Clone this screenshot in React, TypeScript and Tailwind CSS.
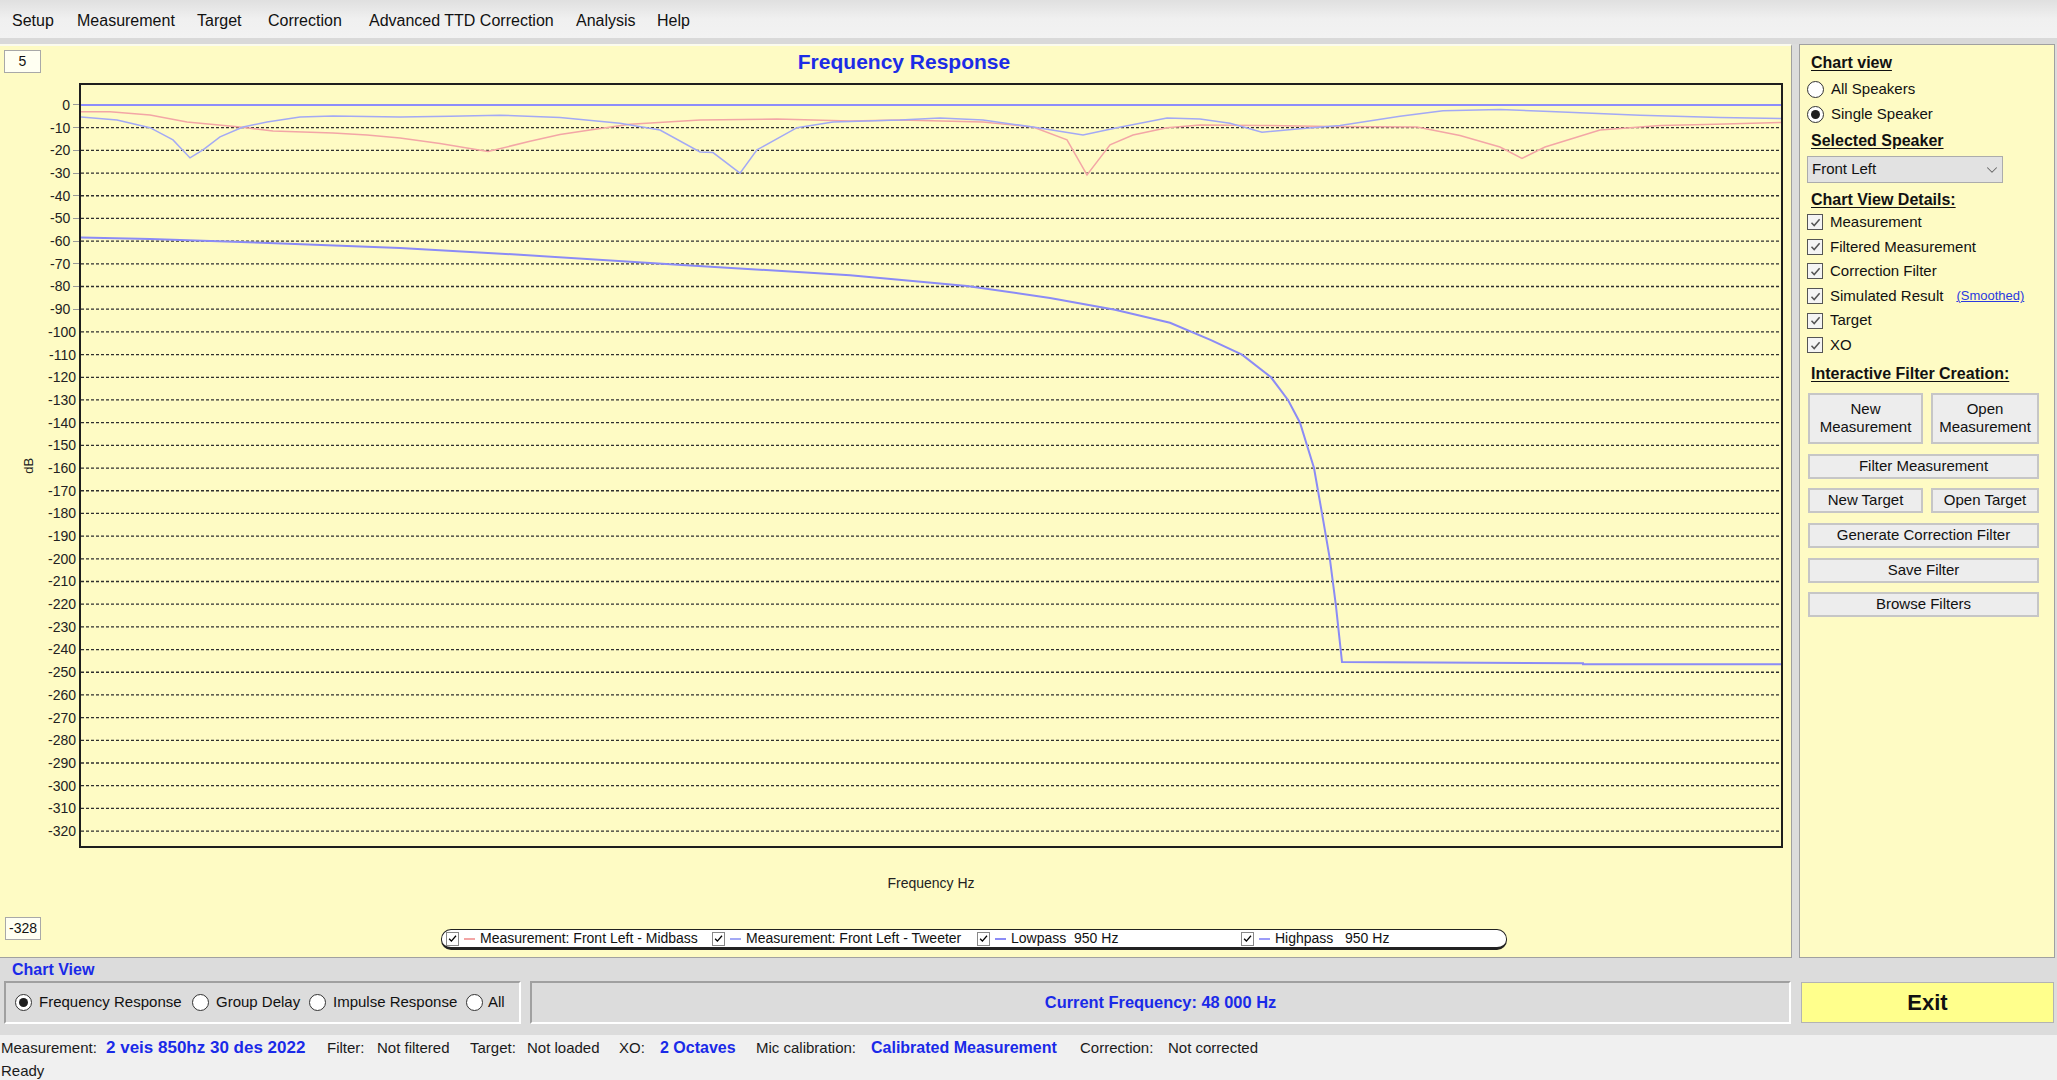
import React from "react";
import { ChevronDown } from "lucide-react";

// chart geometry (plot inner box: page x 81, page y 85, 1700 x 761)
const X0 = 81;
const Y0 = 20; // 0 dB line inside the plot
const DB = 2.269; // px per dB

const toPts = (pts: [number, number][]) =>
  pts.map(([x, d]) => `${(x - X0).toFixed(1)},${(Y0 - d * DB).toFixed(1)}`).join(" ");

const midbass: [number, number][] = [
  [81, -3], [110, -3], [150, -4.4], [187, -7.5], [240, -9.7], [273, -11.5], [333, -12.3],
  [367, -13.2], [400, -14.5], [440, -17], [488, -20.5], [530, -16], [560, -13], [590, -11],
  [630, -8.5], [700, -6.6], [777, -6.2], [850, -7], [900, -6.6], [983, -7.5], [1033, -9.7],
  [1067, -15.4], [1087, -30.8], [1110, -17.6], [1133, -13.2], [1167, -10], [1200, -8.8],
  [1260, -9], [1330, -9.5], [1417, -9.7], [1460, -13.5], [1500, -18.5], [1522, -23.5],
  [1545, -18.5], [1600, -11], [1660, -9], [1706, -8.6], [1782, -7.7],
];

const tweeter: [number, number][] = [
  [81, -5.3], [117, -6.6], [150, -10], [173, -15.4], [190, -23.3], [203, -19.8], [220, -14],
  [243, -9.7], [267, -7.5], [300, -5.3], [333, -4.8], [400, -5.3], [450, -5], [500, -4.5],
  [560, -5.5], [620, -8], [660, -11], [700, -20.7], [713, -21], [740, -30], [757, -19.8],
  [797, -10], [833, -7.5], [900, -6.6], [940, -5.7], [983, -6.6], [1033, -9.7], [1083, -13.2],
  [1117, -10], [1167, -5.7], [1200, -6.2], [1230, -8], [1262, -12], [1300, -10.5], [1340, -9],
  [1400, -5], [1443, -2.5], [1500, -2], [1550, -2.8], [1640, -4.5], [1720, -5.5], [1782, -6],
];

const lowpass: [number, number][] = [
  [81, -58.4], [150, -59], [262, -60.7], [400, -63], [520, -66], [682, -70.5], [850, -75],
  [967, -79.8], [1050, -85], [1115, -90.2], [1170, -96], [1211, -103.6], [1242, -110],
  [1271, -120], [1288, -130], [1300, -140], [1314, -160], [1322, -180], [1330, -200.5],
  [1336, -221], [1342, -245.5], [1583, -246], [1583, -246.5], [1782, -246.5],
];

const yLabels = Array.from({ length: 33 }, (_, i) => (i === 0 ? "0" : `-${i * 10}`));
const grid = Array.from({ length: 32 }, (_, i) => Y0 + (i + 1) * 10 * DB);

const menu = [
  { label: "Setup", w: "w-[65px]" },
  { label: "Measurement", w: "w-[120px]" },
  { label: "Target", w: "w-[71px]" },
  { label: "Correction", w: "w-[101px]" },
  { label: "Advanced TTD Correction", w: "w-[207px]" },
  { label: "Analysis", w: "w-[81px]" },
  { label: "Help", w: "w-[60px]" },
];

const Tick = ({ className }: { className?: string }) => (
  <svg viewBox="0 0 12 12" className={className}>
    <path d="M2.3 6.3 L4.8 8.8 L9.8 3" fill="none" stroke="currentColor" strokeWidth="1.4" />
  </svg>
);

const Radio = ({ on }: { on?: boolean }) => (
  <span className="w-[17px] h-[17px] shrink-0 rounded-full border border-[#333] bg-white flex items-center justify-center">
    {on && <span className="w-[9px] h-[9px] rounded-full bg-[#1e1e1e]" />}
  </span>
);

const Check = ({ label, extra }: { label: string; extra?: string }) => (
  <div className="h-[24.6px] flex items-center">
    <span className="w-[16px] h-[16px] shrink-0 border border-[#555] bg-[#f4f4f4] flex items-center justify-center text-[#555]">
      <Tick className="w-[13px] h-[13px]" />
    </span>
    <span className="ml-[7px] text-[15px]">{label}</span>
    {extra && <span className="ml-[13px] text-[13px] text-[#2a3ae0] underline">{extra}</span>}
  </div>
);

const Heading = ({ children, className }: { children: React.ReactNode; className: string }) => (
  <div className={`h-[20px] leading-[20px] ml-[4px] text-[16px] font-bold underline underline-offset-2 ${className}`}>
    {children}
  </div>
);

const btn =
  "border-2 border-[#c6c6c6] bg-[#ededed] flex items-center justify-center text-center text-[15px] text-[#111]";

const LegendItem = ({ color, label, w }: { color: string; label: string; w: string }) => (
  <div className={`flex items-center shrink-0 ${w}`}>
    <span className="w-[13px] h-[14px] border border-[#888] bg-white flex items-center justify-center text-black">
      <Tick className="w-[11px] h-[11px]" />
    </span>
    <span className={`ml-[5px] w-[11px] h-[2px] ${color}`} />
    <span className="ml-[5px] text-[14px] whitespace-pre text-[#111]">{label}</span>
  </div>
);

function ChartPanel() {
  return (
    <div className="w-[1792px] h-full shrink-0 flex flex-col bg-[#fefbc4] border-t-2 border-t-[#fbfbee] border-r border-r-[#a0a0a0] border-b border-b-[#a0a0a0]">
      {/* title row */}
      <div className="h-[37px] flex items-start">
        <div className="mt-[4px] ml-[4px] w-[37px] h-[23px] border border-[#a8a8a8] bg-[#fffff2] flex items-center justify-center text-[14px]">
          5
        </div>
        <div className="flex-1 mt-[4px] pr-[24px] text-center text-[21px] leading-[24px] font-bold text-[#1c2ce6]">
          Frequency Response
        </div>
      </div>

      {/* plot row */}
      <div className="h-[765px] flex">
        <div className="w-[79px] flex">
          <div className="w-[50px] pl-[8px] flex items-center justify-center">
            <div className="-rotate-90 text-[13px] text-[#222]">dB</div>
          </div>
          <div className="w-[29px] flex flex-col pt-[10.65px]">
            {yLabels.map((l) => (
              <div key={l} className="h-[22.69px] flex items-center justify-end whitespace-nowrap">
                <span className="text-[14px] leading-none text-[#222]">{l}</span>
                <span className="ml-[3px] w-[6px] h-px bg-[#9a9a9a]" />
              </div>
            ))}
          </div>
        </div>
        <div className="w-[1704px] h-[765px] border-2 border-[#1e1e1e] relative">
          <svg className="absolute inset-0" width={1700} height={761} viewBox="0 0 1700 761">
            {grid.map((y) => (
              <line key={y} x1={0} x2={1700} y1={y} y2={y} stroke="#2e2e2e" strokeWidth={1.3} strokeDasharray="3 2" />
            ))}
            <line x1={0} x2={1700} y1={Y0} y2={Y0} stroke="#8d8dfb" strokeWidth={2} />
            <polyline points={toPts(midbass)} fill="none" stroke="#f3a6a6" strokeWidth={1.5} />
            <polyline points={toPts(tweeter)} fill="none" stroke="#a3a9f5" strokeWidth={1.5} />
            <polyline points={toPts(lowpass)} fill="none" stroke="#8b8bf6" strokeWidth={2} />
          </svg>
        </div>
      </div>

      {/* x axis title + legend */}
      <div className="w-[1783px] pl-[79px] mt-[27px] text-center text-[14px] leading-[16px] text-[#222]">
        Frequency Hz
      </div>
      <div className="mt-[26px] flex items-start">
        <div className="ml-[5px] w-[36px] h-[23px] border border-[#a8a8a8] bg-[#fffff2] flex items-center justify-center text-[14px]">
          -328
        </div>
        <div className="ml-[400px] mt-[12px] w-[1066px] h-[21px] pl-[4px] flex items-center bg-white border border-[#222] border-b-[3px] rounded-[10px]">
          <LegendItem w="w-[266px]" color="bg-[#f3a6a6]" label="Measurement: Front Left - Midbass" />
          <LegendItem w="w-[265px]" color="bg-[#a3a9f5]" label="Measurement: Front Left - Tweeter" />
          <LegendItem w="w-[264px]" color="bg-[#8b8bf6]" label="Lowpass  950 Hz" />
          <LegendItem w="w-[200px]" color="bg-[#9c9cf8]" label="Highpass   950 Hz" />
        </div>
      </div>
    </div>
  );
}

function SidePanel() {
  return (
    <div className="ml-[7px] w-[256px] h-full shrink-0 flex flex-col pl-[7px] bg-[#fefbc4] border border-[#a0a0a0] text-[#111]">
      <Heading className="mt-[8px]">Chart view</Heading>
      <div className="mt-[3.5px] h-[25px] flex items-center">
        <Radio />
        <span className="ml-[7px] text-[15px]">All Speakers</span>
      </div>
      <div className="h-[25px] flex items-center">
        <Radio on />
        <span className="ml-[7px] text-[15px]">Single Speaker</span>
      </div>
      <Heading className="mt-[4.5px]">Selected Speaker</Heading>
      <div className="mt-[5px] w-[196px] h-[27px] border border-[#acacac] bg-[#e2e2e2] flex items-center justify-between pl-[4px] pr-[1px] text-[15px]">
        <span>Front Left</span>
        <ChevronDown size={18} strokeWidth={1.4} className="text-[#666]" />
      </div>
      <Heading className="mt-[7px]">Chart View Details:</Heading>
      <Check label="Measurement" />
      <Check label="Filtered Measurement" />
      <Check label="Correction Filter" />
      <Check label="Simulated Result" extra="(Smoothed)" />
      <Check label="Target" />
      <Check label="XO" />
      <Heading className="mt-[6.4px]">Interactive Filter Creation:</Heading>
      <div className="mt-[9px] ml-[1px] flex gap-[8px]">
        <div className={`${btn} w-[115px] h-[51px] leading-[18px]`}>
          New
          <br />
          Measurement
        </div>
        <div className={`${btn} w-[108px] h-[51px] leading-[18px]`}>
          Open
          <br />
          Measurement
        </div>
      </div>
      <div className={`${btn} mt-[10px] ml-[1px] w-[231px] h-[25px]`}>Filter Measurement</div>
      <div className="mt-[9px] ml-[1px] flex gap-[8px]">
        <div className={`${btn} w-[115px] h-[25px]`}>New Target</div>
        <div className={`${btn} w-[108px] h-[25px]`}>Open Target</div>
      </div>
      <div className={`${btn} mt-[10px] ml-[1px] w-[231px] h-[25px]`}>Generate Correction Filter</div>
      <div className={`${btn} mt-[10px] ml-[1px] w-[231px] h-[25px]`}>Save Filter</div>
      <div className={`${btn} mt-[9px] ml-[1px] w-[231px] h-[25px]`}>Browse Filters</div>
    </div>
  );
}

function BottomBar() {
  return (
    <div className="h-[77px] shrink-0 flex flex-col bg-[#dcdcdc]">
      <div className="h-[23px] pl-[12px] pt-[2px] text-[16px] leading-[20px] font-bold text-[#1a2ae8]">Chart View</div>
      <div className="h-[43px] flex items-start">
        <div className="ml-[4px] w-[517px] h-[43px] pl-[9px] flex items-center border-2 border-t-[#a0a0a0] border-l-[#a0a0a0] border-b-white border-r-white text-[15px]">
          <div className="w-[177px] flex items-center">
            <Radio on />
            <span className="ml-[7px]">Frequency Response</span>
          </div>
          <div className="w-[117px] flex items-center">
            <Radio />
            <span className="ml-[7px]">Group Delay</span>
          </div>
          <div className="w-[157px] flex items-center">
            <Radio />
            <span className="ml-[7px]">Impulse Response</span>
          </div>
          <div className="flex items-center">
            <Radio />
            <span className="ml-[5px]">All</span>
          </div>
        </div>
        <div className="ml-[9px] w-[1261px] h-[43px] flex items-center justify-center border-2 border-t-[#a0a0a0] border-l-[#a0a0a0] border-b-white border-r-white text-[16.4px] font-bold text-[#1a2ae8]">
          Current Frequency: 48 000 Hz
        </div>
        <div className="ml-[10px] mt-[1px] w-[253px] h-[41px] flex items-center justify-center bg-[#ffff8c] border border-[#b3b3b3] text-[22px] font-bold text-[#111]">
          Exit
        </div>
      </div>
    </div>
  );
}

function StatusBar() {
  const blue = "font-bold text-[#1a2ae8]";
  return (
    <div className="h-[45px] shrink-0 flex flex-col bg-[#f0f0f0] text-[15px] text-[#1a1a1a]">
      <div className="h-[26px] flex items-center whitespace-nowrap">
        <span className="ml-[1px] w-[105px] shrink-0">Measurement:</span>
        <span className={`w-[221px] shrink-0 text-[17px] ${blue}`}>2 veis 850hz 30 des 2022</span>
        <span className="w-[50px] shrink-0">Filter:</span>
        <span className="w-[93px] shrink-0">Not filtered</span>
        <span className="w-[57px] shrink-0">Target:</span>
        <span className="w-[92px] shrink-0">Not loaded</span>
        <span className="w-[41px] shrink-0">XO:</span>
        <span className={`w-[96px] shrink-0 text-[16px] ${blue}`}>2 Octaves</span>
        <span className="w-[115px] shrink-0">Mic calibration:</span>
        <span className={`w-[209px] shrink-0 text-[16px] ${blue}`}>Calibrated Measurement</span>
        <span className="w-[88px] shrink-0">Correction:</span>
        <span>Not corrected</span>
      </div>
      <div className="h-[19px] leading-[19px] pl-[1px]">Ready</div>
    </div>
  );
}

export default function App() {
  return (
    <div className="w-[2057px] h-[1080px] flex flex-col overflow-hidden bg-[#f0f0f0] font-['Liberation_Sans',Arial,sans-serif] text-[#111]">
      {/* menu */}
      <div className="h-[44px] shrink-0 flex flex-col">
        <div className="h-[38px] pt-[4px] pl-[12px] flex items-center text-[16px] text-[#111] bg-linear-to-b from-[#e0e0e0] via-[#f0f0f0] to-[#f2f2f2]">
          {menu.map((m) => (
            <span key={m.label} className={`${m.w} shrink-0 whitespace-nowrap`}>
              {m.label}
            </span>
          ))}
        </div>
        <div className="h-[6px] bg-[#d9d9d9]" />
      </div>

      <div className="h-[914px] shrink-0 flex bg-[#dcdcdc]">
        <ChartPanel />
        <SidePanel />
      </div>

      <BottomBar />
      <StatusBar />
    </div>
  );
}
